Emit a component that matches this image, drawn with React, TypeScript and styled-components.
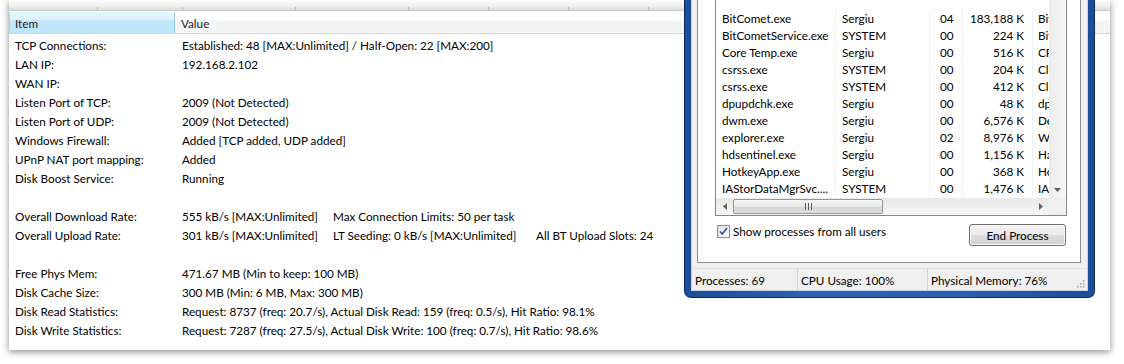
import styled, { createGlobalStyle } from "styled-components"

const GlobalStyle = createGlobalStyle`
  html, body {
    margin: 0;
    padding: 0;
    background: #fff;
  }
  body {
    font-family: "Segoe UI", Lato, "Open Sans", sans-serif;
    font-size: 11.7px;
    color: #000;
  }
`

type StatRow = [string, string[]] | null

const stats: StatRow[] = [
  ["TCP Connections:", ["Established: 48 [MAX:Unlimited] / Half-Open: 22 [MAX:200]"]],
  ["LAN IP:", ["192.168.2.102"]],
  ["WAN IP:", []],
  ["Listen Port of TCP:", ["2009 (Not Detected)"]],
  ["Listen Port of UDP:", ["2009 (Not Detected)"]],
  ["Windows Firewall:", ["Added [TCP added, UDP added]"]],
  ["UPnP NAT port mapping:", ["Added"]],
  ["Disk Boost Service:", ["Running"]],
  null,
  ["Overall Download Rate:", ["555 kB/s [MAX:Unlimited]", "Max Connection Limits: 50 per task"]],
  [
    "Overall Upload Rate:",
    ["301 kB/s [MAX:Unlimited]", "LT Seeding: 0 kB/s [MAX:Unlimited]", "All BT Upload Slots: 24"],
  ],
  null,
  ["Free Phys Mem:", ["471.67 MB (Min to keep: 100 MB)"]],
  ["Disk Cache Size:", ["300 MB (Min: 6 MB, Max: 300 MB)"]],
  [
    "Disk Read Statistics:",
    ["Request: 8737 (freq: 20.7/s), Actual Disk Read: 159 (freq: 0.5/s), Hit Ratio: 98.1%"],
  ],
  [
    "Disk Write Statistics:",
    ["Request: 7287 (freq: 27.5/s), Actual Disk Write: 100 (freq: 0.7/s), Hit Ratio: 98.6%"],
  ],
]

const partWidths = [151, 203]

const processes = [
  ["BitComet.exe", "Sergiu", "04", "183,188 K", "BitComet"],
  ["BitCometService.exe", "SYSTEM", "00", "224 K", "BitComet Service"],
  ["Core Temp.exe", "Sergiu", "00", "516 K", "CPU temperature monitor"],
  ["csrss.exe", "SYSTEM", "00", "204 K", "Client Server Runtime Process"],
  ["csrss.exe", "SYSTEM", "00", "412 K", "Client Server Runtime Process"],
  ["dpupdchk.exe", "Sergiu", "00", "48 K", "dpupdchk"],
  ["dwm.exe", "Sergiu", "00", "6,576 K", "Desktop Window Manager"],
  ["explorer.exe", "Sergiu", "02", "8,976 K", "Windows Explorer"],
  ["hdsentinel.exe", "Sergiu", "00", "1,156 K", "Hard Disk Sentinel"],
  ["HotkeyApp.exe", "Sergiu", "00", "368 K", "Hotkey App"],
  ["IAStorDataMgrSvc....", "SYSTEM", "00", "1,476 K", "IAStorDataMgrSvc"],
]

const procCols = [
  { w: 120, align: "left", pad: "0 0 0 6px" },
  { w: 94, align: "left", pad: "0 0 0 6px" },
  { w: 33, align: "left", pad: "0 0 0 10px" },
  { w: 70, align: "right", pad: "0 8px 0 0" },
  { w: 80, align: "left", pad: "0 0 0 5px" },
]

const ticks = [88, 173, 286, 399, 479, 559, 639]

export default function App() {
  return (
    <Page>
      <GlobalStyle />
      <Panel>
        <TopStrip>
          <svg width="1101" height="10">
            {ticks.map((x) => (
              <rect key={x} x={x} y={7} width={1} height={3} fill="#b9b9b9" />
            ))}
          </svg>
        </TopStrip>
        <Header>
          <HeadCell $active $w={166}>Item</HeadCell>
          <HeadCell>Value</HeadCell>
        </Header>
        <StatList>
          {stats.map((row, i) =>
            row ? (
              <StatLine key={i}>
                <ItemCell>{row[0]}</ItemCell>
                <ValueCell>
                  {row[1].map((p, j) => (
                    <Part key={j} $w={j < row[1].length - 1 ? partWidths[j] : undefined}>
                      {p}
                    </Part>
                  ))}
                </ValueCell>
              </StatLine>
            ) : (
              <StatLine key={i} />
            )
          )}
        </StatList>
      </Panel>

      <TaskWindow>
        <Client>
          <TabPage>
            <ListBox>
              <ListView>
                <Rows>
                  {processes.map((p, i) => (
                    <ProcRow key={i}>
                      {p.map((cell, j) => (
                        <ProcCell key={j} $w={procCols[j].w} $align={procCols[j].align} $pad={procCols[j].pad}>
                          {cell}
                        </ProcCell>
                      ))}
                    </ProcRow>
                  ))}
                </Rows>
                <VScroll>
                  <svg width="7" height="4" viewBox="0 0 7 4">
                    <path d="M0 0h7L3.5 4z" fill="#606060" />
                  </svg>
                </VScroll>
              </ListView>
              <HScrollRow>
                <HTrack>
                  <svg width="4" height="7" viewBox="0 0 4 7">
                    <path d="M4 0v7L0 3.5z" fill="#606060" />
                  </svg>
                  <Thumb>
                    <svg width="7" height="7" viewBox="0 0 7 7">
                      <rect x="0" y="0" width="1" height="7" fill="#5a5a5a" />
                      <rect x="3" y="0" width="1" height="7" fill="#5a5a5a" />
                      <rect x="6" y="0" width="1" height="7" fill="#5a5a5a" />
                    </svg>
                  </Thumb>
                  <TrackFill />
                  <svg width="4" height="7" viewBox="0 0 4 7">
                    <path d="M0 0v7L4 3.5z" fill="#606060" />
                  </svg>
                </HTrack>
                <Corner />
              </HScrollRow>
            </ListBox>
            <Controls>
              <CheckLabel>
                <CheckBox>
                  <svg width="9" height="9" viewBox="0 0 9 9">
                    <path d="M1 4.5l2.3 2.6L8 1" stroke="#3a4f8f" strokeWidth="1.6" fill="none" />
                  </svg>
                </CheckBox>
                Show processes from all users
              </CheckLabel>
              <Button>End Process</Button>
            </Controls>
          </TabPage>
          <StatusBar>
            <StatusCell $w={106}>Processes: 69</StatusCell>
            <StatusCell $w={130}>CPU Usage: 100%</StatusCell>
            <StatusCell>Physical Memory: 76%</StatusCell>
            <Grip>
              <svg width="10" height="10" viewBox="0 0 10 10">
                {[
                  [8, 2],
                  [8, 5],
                  [5, 5],
                  [8, 8],
                  [5, 8],
                  [2, 8],
                ].map(([x, y]) => (
                  <rect key={`${x}-${y}`} x={x} y={y} width={1.5} height={1.5} fill="#a8a8a8" />
                ))}
              </svg>
            </Grip>
          </StatusBar>
        </Client>
      </TaskWindow>
    </Page>
  )
}

const Page = styled.div`
  position: relative;
  width: 1124px;
  height: 364px;
  overflow: hidden;
  background: #fff;
`
const Panel = styled.div`
  margin-left: 9px;
  width: 1101px;
  height: 350px;
  background: #fff;
  box-shadow: 0 2px 7px rgba(0, 0, 0, 0.45);
`
const TopStrip = styled.div`
  height: 10px;
  background: linear-gradient(#fdfdfd, #ececec 70%, #d9d9d9);
  border-bottom: 1px solid #cfcfcf;
  svg {
    display: block;
  }
`
const Header = styled.div`
  display: flex;
  margin-top: 1px;
  height: 21px;
  border-bottom: 1px solid #d5d5d5;
  background: linear-gradient(#fff 0, #fff 40%, #f3f4f6 41%, #f3f4f6 100%);
`
const HeadCell = styled.div<{ $active?: boolean; $w?: number }>`
  display: flex;
  align-items: center;
  box-sizing: border-box;
  padding-left: 6px;
  color: #1e1e1e;
  ${(p) => (p.$w ? `width: ${p.$w}px;` : "flex: 1;")}
  ${(p) =>
    p.$active &&
    `
    background: linear-gradient(#e4f6fe 0, #d9f1fc 40%, #c2e7fa 41%, #bfe6fa 100%);
    border-right: 1px solid #93c9e3;
    border-left: 1px solid #a6d5ec;
    padding-left: 5px;
  `}
`
const StatList = styled.div`
  padding-top: 1px;
`
const StatLine = styled.div`
  display: flex;
  height: 19px;
  align-items: center;
  white-space: nowrap;
`
const ItemCell = styled.div`
  width: 173px;
  padding-left: 6px;
  box-sizing: border-box;
`
const ValueCell = styled.div`
  display: flex;
`
const Part = styled.span<{ $w?: number }>`
  ${(p) => (p.$w ? `width: ${p.$w}px;` : "")}
`

const TaskWindow = styled.div`
  position: absolute;
  left: 684px;
  top: 0;
  width: 411px;
  height: 298px;
  box-sizing: border-box;
  display: flex;
  padding: 0 6px 6px 6px;
  background: linear-gradient(90deg, #1d4c98, #2c62b2 30%, #2a5eae 70%, #1d4c98);
  border: 1px solid #0b2c63;
  border-top: none;
  border-radius: 0 0 7px 7px;
`
const Client = styled.div`
  flex: 1;
  display: flex;
  flex-direction: column;
  background: #f0f0f0;
  border: 1px solid #c6d2e6;
  border-top: none;
`
const TabPage = styled.div`
  height: 263px;
  margin: 0 6px 0 5px;
  box-sizing: border-box;
  background: #fff;
  border: 1px solid #898c95;
  border-top: none;
  padding-left: 17px;
`
const ListBox = styled.div`
  width: 352px;
  box-sizing: border-box;
  border: 1px solid #828790;
  border-top: none;
  background: #fff;
`
const ListView = styled.div`
  display: flex;
  height: 198px;
`
const Rows = styled.div`
  flex: 1;
  overflow: hidden;
  padding-top: 10px;
  position: relative;
`
const ProcRow = styled.div`
  display: flex;
  height: 17px;
  align-items: center;
  white-space: nowrap;
`
const ProcCell = styled.div<{ $w: number; $align: string; $pad: string }>`
  flex: none;
  width: ${(p) => p.$w}px;
  box-sizing: border-box;
  height: 17px;
  line-height: 17px;
  overflow: hidden;
  text-align: ${(p) => p.$align};
  padding: ${(p) => p.$pad};
  border-right: 1px solid #edf1f6;
`
const VScroll = styled.div`
  width: 17px;
  background: linear-gradient(90deg, #ececec, #f7f7f7);
  display: flex;
  align-items: flex-end;
  justify-content: center;
  padding-bottom: 6px;
  box-sizing: border-box;
`
const HScrollRow = styled.div`
  display: flex;
  height: 17px;
`
const HTrack = styled.div`
  flex: 1;
  display: flex;
  align-items: center;
  padding: 0 6px 0 7px;
  background: linear-gradient(#e9e9e9, #f6f6f6);
`
const Thumb = styled.div`
  width: 150px;
  height: 15px;
  margin-left: 6px;
  box-sizing: border-box;
  border: 1px solid #979797;
  border-radius: 2px;
  background: linear-gradient(#f6f6f6, #e8e8e8 50%, #d8d8d8 51%, #dcdcdc);
  display: flex;
  align-items: center;
  justify-content: center;
`
const TrackFill = styled.div`
  flex: 1;
`
const Corner = styled.div`
  width: 17px;
  background: #f0f0f0;
`
const Controls = styled.div`
  width: 352px;
  display: flex;
  justify-content: space-between;
  align-items: flex-start;
  margin-top: 8px;
`
const CheckLabel = styled.label`
  display: flex;
  align-items: center;
  gap: 3px;
  margin-left: 2px;
  height: 14px;
  white-space: nowrap;
`
const CheckBox = styled.span`
  width: 13px;
  height: 13px;
  box-sizing: border-box;
  border: 1px solid #8e8f8f;
  background: linear-gradient(135deg, #dcdcdc, #fbfbfb);
  display: flex;
  align-items: center;
  justify-content: center;
`
const Button = styled.button`
  width: 97px;
  height: 22px;
  margin-right: 1px;
  font: inherit;
  color: #000;
  border: 1px solid #707070;
  border-radius: 3px;
  background: linear-gradient(#f2f2f2, #ebebeb 50%, #dddddd 51%, #cfcfcf);
  box-shadow: inset 0 0 0 1px #fcfcfc;
  padding: 0;
`
const StatusBar = styled.div`
  display: flex;
  height: 22px;
  margin-top: 5px;
  align-items: stretch;
  border-top: 1px solid #e2e2e2;
  box-sizing: border-box;
`
const StatusCell = styled.div<{ $w?: number }>`
  display: flex;
  align-items: center;
  padding-left: 3px;
  box-sizing: border-box;
  ${(p) => (p.$w ? `width: ${p.$w}px; border-right: 1px solid #d5d5d5;` : "flex: 1;")}
`
const Grip = styled.div`
  display: flex;
  align-items: flex-end;
  padding: 0 2px 2px 0;
`
